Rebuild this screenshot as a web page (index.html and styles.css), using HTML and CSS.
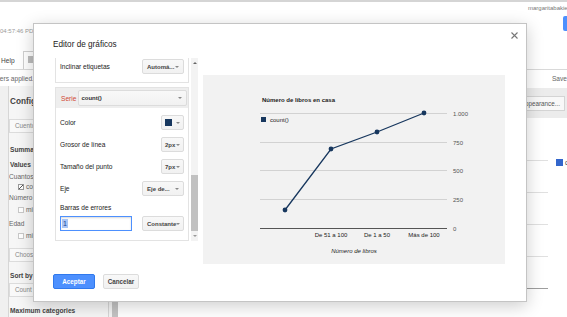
FILE: index.html
```html
<!DOCTYPE html>
<html lang="es">
<head>
    <meta charset="UTF-8">
    <meta name="viewport" content="width=device-width, initial-scale=1.0">
    <title>Editor de gráficos</title>
    <link rel="stylesheet" href="styles.css">
</head>
<body>
    <div class="page">
        <div class="topbar">
            <div class="stamp">04:57:46 PDT</div>
            <div class="account">
                <div class="user">margaritabakiev</div>
                <div class="share"></div>
            </div>
        </div>
        <div class="tabs">
            <span class="tab-help">Help</span>
            <span class="tab-box"><span class="tab-icon"></span></span>
        </div>
        <div class="toolbar">
            <span class="filters">No filters applied.</span>
            <span class="save">Save</span>
        </div>
        <div class="main">
            <aside class="side">
                <div class="side-card">
                    <div class="side-title">Configure chart</div>
                    <div class="side-btn s-cuento">Cuentos libros</div>
                    <div class="side-head s-summa">Summarize by</div>
                    <div class="side-head s-values">Values</div>
                    <div class="side-item s-cuantos">Cuantos libros</div>
                    <div class="side-check"><span class="box on"></span>count</div>
                    <div class="side-item s-numero">Número de hijos</div>
                    <div class="side-check s-mi1"><span class="box"></span>min</div>
                    <div class="side-item s-edad">Edad</div>
                    <div class="side-check s-mi2"><span class="box"></span>min</div>
                    <div class="side-btn s-choose">Choose</div>
                    <div class="side-head s-sort">Sort by</div>
                    <div class="side-btn s-count">Count</div>
                    <div class="side-head s-max">Maximum categories</div>
                </div>
                <div class="side-scroll"><div class="side-thumb"></div></div>
            </aside>
            <section class="canvas">
                <div class="canvas-bar"><span class="canvas-btn">Customize appearance...</span></div>
                <div class="canvas-chart">
                    <div class="plot">
                        <div class="grid"></div>
                        <div class="grid"></div>
                        <div class="grid"></div>
                        <div class="grid"></div>
                        <div class="axis"></div>
                    </div>
                    <div class="legend"><span class="legend-sq"></span>count()</div>
                </div>
            </section>
        </div>
    </div>

    <!-- dialog -->
    <div class="modal">
        <div class="modal-title">Editor de gráficos</div>
        <svg class="close" width="7" height="7" viewBox="0 0 7 7">
            <path d="M0.5 0.5 L6.5 6.5 M6.5 0.5 L0.5 6.5" stroke="#777" stroke-width="1.1"/>
        </svg>

        <div class="modal-body">
            <div class="settings">
                <div class="settings-list">
                    <div class="sec sec-first">
                        <div class="row">
                            <span>Inclinar etiquetas</span>
                            <span class="dd dd-wide">Automá... <i class="arr"></i></span>
                        </div>
                    </div>
                    <div class="sec sec-serie">
                        <div class="sec-head">
                            <span class="serie">Serie</span>
                            <span class="dd dd-serie">count() <i class="arr"></i></span>
                        </div>
                        <div class="sec-body">
                            <div class="row">
                                <span>Color</span>
                                <span class="dd dd-small"><span class="swatch"></span><i class="arr"></i></span>
                            </div>
                            <div class="row">
                                <span>Grosor de línea</span>
                                <span class="dd dd-small">2px <i class="arr"></i></span>
                            </div>
                            <div class="row">
                                <span>Tamaño del punto</span>
                                <span class="dd dd-small">7px <i class="arr"></i></span>
                            </div>
                            <div class="row">
                                <span>Eje</span>
                                <span class="dd dd-wide">Eje de... <i class="arr"></i></span>
                            </div>
                            <div class="label">Barras de errores</div>
                            <div class="row row-input">
                                <span class="input"><span class="sel">1</span></span>
                                <span class="dd dd-wide">Constante <i class="arr"></i></span>
                            </div>
                        </div>
                    </div>
                </div>
                <div class="settings-scroll">
                    <i class="up"></i>
                    <div class="track"><div class="thumb"></div></div>
                    <i class="down"></i>
                </div>
            </div>

            <div class="chart-box">
                <svg width="302" height="189" viewBox="0 0 302 189">
                    <text x="59" y="26.5" class="ch-title">Número de libros en casa</text>
                    <rect x="58" y="42" width="5" height="5" fill="#17375e"/>
                    <text x="67" y="47" class="ch-legend">count()</text>
                    <g stroke="#d2d2d2" stroke-width="1">
                        <line x1="57" y1="38.5" x2="244" y2="38.5"/>
                        <line x1="57" y1="67.5" x2="244" y2="67.5"/>
                        <line x1="57" y1="95.5" x2="244" y2="95.5"/>
                        <line x1="57" y1="124.5" x2="244" y2="124.5"/>
                    </g>
                    <line x1="57" y1="153.5" x2="244" y2="153.5" stroke="#555" stroke-width="1"/>
                    <g class="ch-tick">
                        <text x="250" y="40.5">1.000</text>
                        <text x="250" y="69.5">750</text>
                        <text x="250" y="97.5">500</text>
                        <text x="250" y="126.5">250</text>
                        <text x="250" y="155.5">0</text>
                    </g>
                    <polyline points="82,135 128,74 174,57 221,38" fill="none" stroke="#17375e" stroke-width="1.3"/>
                    <g fill="#17375e">
                        <circle cx="82" cy="135" r="2.4"/>
                        <circle cx="128" cy="74" r="2.4"/>
                        <circle cx="174" cy="57" r="2.4"/>
                        <circle cx="221" cy="38" r="2.4"/>
                    </g>
                    <g class="ch-cat">
                        <text x="128" y="162">De 51 a 100</text>
                        <text x="174" y="162">De 1 a 50</text>
                        <text x="221" y="162">Más de 100</text>
                    </g>
                    <text x="151" y="178" class="ch-axis">Número de libros</text>
                </svg>
            </div>
        </div>

        <div class="modal-foot">
            <span class="btn btn-ok">Aceptar</span>
            <span class="btn btn-cancel">Cancelar</span>
        </div>
    </div>
</body>
</html>
```

FILE: styles.css
```css
*{ margin: 0; padding: 0; box-sizing: border-box;}
body{ width: 567px; height: 317px; overflow: hidden; position: relative; background: #fff; font-family: "Liberation Sans", Arial, sans-serif; color: #222;}

/* page behind the dialog */
.page{ height: 317px; display: flex; flex-direction: column; overflow: hidden;}

.topbar{ height: 52px; flex: none; border-top: 2px solid #d5d5d5; display: flex; justify-content: space-between;}
.stamp{ margin-top: 24px; font-size: 6px; line-height: 10px; color: #9a9a9a;}
.account{ width: 39px;}
.user{ margin-top: 1px; font-size: 6px; line-height: 10px; color: #777; white-space: nowrap;}
.share{ margin: 3px 0 0 35px; width: 10px; height: 15px; background: #4d90fe; border-radius: 2px;}

.tabs{ height: 18px; flex: none; display: flex; align-items: flex-end; border-bottom: 1px solid #d9d9d9;}
.tab-help{ padding-left: 1px; margin-bottom: 3px; font-size: 6.6px; line-height: 10px; color: #444;}
.tab-box{ margin-left: 8px; width: 14px; height: 18px; border: 1px solid #cfcfcf; border-bottom: none; background: #fff;}
.tab-icon{ display: block; margin: 4px 0 0 4px; width: 6px; height: 7px; background: #bdbdbd;}

.toolbar{ height: 16px; flex: none; display: flex; justify-content: space-between; align-items: center; font-size: 6.6px; color: #666;}
.filters{ margin-left: -17px; white-space: nowrap;}

.main{ flex: 1; display: flex; min-height: 0; overflow: hidden;}
.side{ width: 118px; display: flex; background: #f0f0f0; overflow: hidden;}
.side-card{ margin-left: 8px; width: 100px; border-left: 1px solid #d6d6d6; background: #f6f6f6; padding-top: 10px; font-size: 6.6px; line-height: 10px; color: #666; white-space: nowrap; overflow: hidden;}
.side-title{ padding-left: 1px; font-size: 8.2px; line-height: 12px; font-weight: bold; color: #444;}
.side-head{ padding-left: 1px; font-weight: bold; color: #444;}
.side-btn{ height: 14px; line-height: 12px; padding-left: 5px; border: 1px solid #dcdcdc; background: #f9f9f9; color: #888; font-size: 6.3px;}
.side-check{ padding-left: 9px; display: flex; align-items: center;}
.box{ width: 6px; height: 6px; margin-right: 2px; border: 1px solid #c8c8c8; background: #fff;}
.box.on{ border-color: #999; background: #fff linear-gradient(135deg, transparent 40%, #555 40%, #555 55%, transparent 55%);}
.s-cuento{ margin-top: 11px;}
.s-summa{ margin-top: 12px;}
.s-values{ margin-top: 5px;}
.s-cuantos{ margin-top: 2px;}
.s-numero{ margin-top: 1px;}
.s-mi1{ margin-top: 2px;}
.s-edad{ margin-top: 4px;}
.s-mi2{ margin-top: 2px;}
.s-choose{ margin-top: 7px;}
.s-sort{ margin-top: 9px;}
.s-count{ margin-top: 2px;}
.s-max{ margin-top: 9px;}
.side-scroll{ width: 10px; border-left: 1px solid #d6d6d6; background: #f4f4f4; padding-left: 3px;}
.side-thumb{ margin-top: 190px; width: 6px; height: 60px; background: #c3c3c3;}

.canvas{ flex: 1; min-width: 0; overflow: hidden;}
.canvas-bar{ margin-top: 2px; height: 30px; background: #ececec; display: flex; justify-content: flex-end; align-items: center; padding-right: 2px;}
.canvas-btn{ height: 15px; padding: 0 4px; border: 1px solid #d4d4d4; background: #f8f8f8; font-size: 6.3px; line-height: 13px; color: #555; white-space: nowrap;}
.canvas-chart{ margin-top: 42px; display: flex; justify-content: flex-end;}
.plot{ width: 250px; flex: none;}
.grid{ height: 32px; border-top: 1px solid #e0e0e0;}
.axis{ border-top: 1px solid #9e9e9e;}
.legend{ flex: none; width: 19px; padding-left: 8px; margin-top: -1px; height: 7px; display: flex; align-items: center; white-space: nowrap; font-size: 6.6px; color: #444;}
.legend-sq{ flex: none; width: 7px; height: 7px; margin-right: 2px; background: #3366cc;}

/* dialog */
.modal{ position: absolute; left: 33px; top: 23px; width: 494px; height: 279px; background: #fff; border: 1px solid #c4c4c4; box-shadow: 0 4px 16px rgba(0,0,0,.2); padding: 15px 21px 0 19px;}
.modal-title{ font-size: 8.2px; line-height: 12px; color: #222;}
.close{ position: absolute; top: 8px; right: 8px;}

.modal-body{ margin-top: 7px; display: flex; align-items: flex-start;}
.settings{ width: 146px; height: 183px; display: flex; font-size: 6.6px; color: #222;}
.settings-list{ margin-left: 2px; width: 134px; overflow: hidden;}

.sec{ border: 1px solid #e3e3e3;}
.sec-first{ border-top: none; padding: 1px 4px 8px;}
.sec-first .row{ margin-bottom: 0;}
.sec-serie{ margin-top: 4px;}
.sec-head{ height: 20px; background: #eeeeee; display: flex; align-items: center; padding: 0 1px 0 5px;}
.serie{ color: #d14836; margin-right: 2px; white-space: nowrap;}
.sec-body{ padding: 7px 4px 9px;}

.row{ height: 15px; display: flex; justify-content: space-between; align-items: center; margin-bottom: 7px;}
.row-input{ margin: 3px 0 0;}
.label{ line-height: 10px;}

.dd{ height: 15px; display: flex; align-items: center; justify-content: space-between; padding: 0 4px; border: 1px solid #dcdcdc; border-radius: 2px; background: linear-gradient(#f8f8f8, #f1f1f1); font-size: 6px; font-weight: bold; color: #444; white-space: nowrap;}
.dd-wide{ width: 42px;}
.dd-small{ width: 23px; padding: 0 3px;}
.dd-serie{ flex: 1; height: 16px; padding-left: 2px; font-weight: bold; color: #333;}
.arr{ display: block; width: 0; height: 0; border-left: 2px solid transparent; border-right: 2px solid transparent; border-top: 2px solid #888;}
.swatch{ width: 7px; height: 7px; background: #17375e;}

.input{ width: 72px; height: 15px; border: 1px solid #4d90fe; background: #fff; padding: 2px 1px; display: flex; box-shadow: inset 0 1px 2px rgba(0,0,0,.15);}
.sel{ background: #a9c5f5; color: #1a3d8f; font-size: 7px; line-height: 9px; padding: 0 1px;}

.settings-scroll{ margin-left: 2px; width: 7px; background: #f3f3f3; display: flex; flex-direction: column; align-items: center;}
.up, .down{ display: block; width: 0; height: 0; margin: 4px 0; border-left: 2px solid transparent; border-right: 2px solid transparent;}
.up{ border-bottom: 2px solid #666;}
.down{ border-top: 2px solid #999;}
.track{ flex: 1; width: 7px;}
.thumb{ margin-top: 107px; height: 56px; background: #c1c1c1;}

.chart-box{ margin: 17px 0 0 4px; width: 302px; height: 189px; background: #f2f2f2;}
.chart-box svg{ display: block; font-family: "Liberation Sans", Arial, sans-serif;}
.ch-title{ font-size: 6px; font-weight: bold; fill: #222;}
.ch-legend{ font-size: 6px; fill: #222;}
.ch-tick text{ font-size: 6px; fill: #555;}
.ch-cat text{ font-size: 6px; fill: #222; text-anchor: middle;}
.ch-axis{ font-size: 6px; font-style: italic; fill: #222; text-anchor: middle;}

.modal-foot{ margin-top: 10px; display: flex; gap: 8px;}
.btn{ height: 15px; display: flex; align-items: center; justify-content: center; border-radius: 2px; font-size: 6.3px; font-weight: bold;}
.btn-ok{ width: 42px; background: #4d90fe; border: 1px solid #3079ed; color: #fff;}
.btn-cancel{ width: 36px; background: linear-gradient(#f8f8f8, #f1f1f1); border: 1px solid #dcdcdc; color: #444;}
```
